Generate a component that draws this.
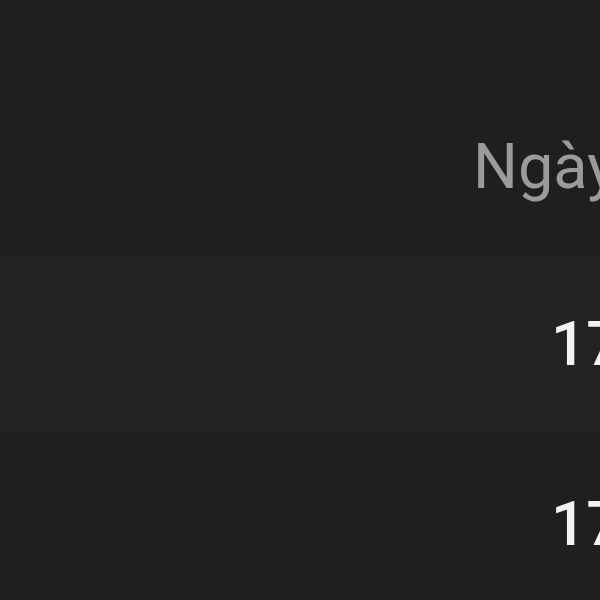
const rows = ["17/05/2024", "17/05/2024"];

export default function App() {
  return (
    <div
      className="w-[600px] h-[600px] overflow-hidden bg-[#1e1f21] whitespace-nowrap"
      style={{ fontFamily: "Roboto, 'Noto Sans', sans-serif" }}
    >
      <div className="h-[256px] pt-[135px] pl-[473px]">
        <span className="text-[63px] leading-none text-[#9a9b9c]">Ngày tạo</span>
      </div>
      <div className="h-[176px] pt-[57px] pl-[551px] bg-[#222325]">
        <span className="text-[62px] leading-none font-medium text-[#f2f2f2]">{rows[0]}</span>
      </div>
      <div className="h-[176px] pt-[61px] pl-[551px]">
        <span className="text-[62px] leading-none font-medium text-[#f2f2f2]">{rows[1]}</span>
      </div>
    </div>
  );
}
